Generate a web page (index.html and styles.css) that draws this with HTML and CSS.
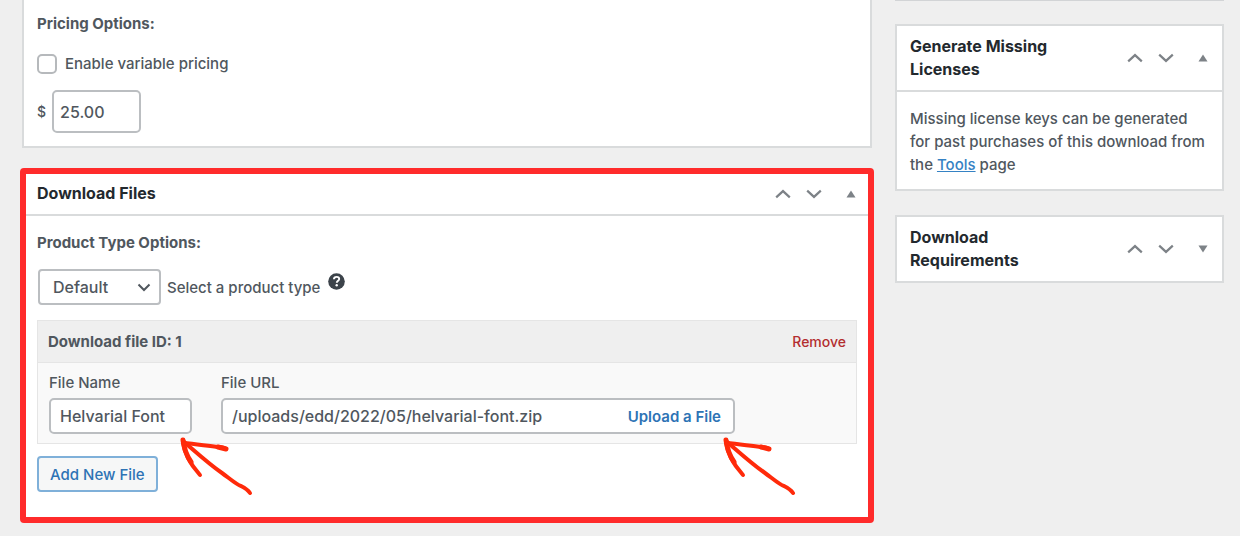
FILE: index.html
```html
<!DOCTYPE html>
<html lang="en">
<head>
<meta charset="utf-8">
<title>Edit Download</title>
<link rel="stylesheet" href="styles.css">
</head>
<body>
<svg class="defs" aria-hidden="true">
  <symbol id="up" viewBox="0 0 16 10"><path d="M1.2 8.4 8 2.1l6.8 6.3" fill="none" stroke="currentColor" stroke-width="2.2"/></symbol>
  <symbol id="down" viewBox="0 0 16 10"><path d="M1.2 1.6 8 7.9l6.8-6.3" fill="none" stroke="currentColor" stroke-width="2.2"/></symbol>
  <symbol id="open" viewBox="0 0 10 8"><path d="M5 .5 9.5 7.5h-9z" fill="currentColor"/></symbol>
  <symbol id="closed" viewBox="0 0 10 8"><path d="M5 7.5.5.5h9z" fill="currentColor"/></symbol>
  <symbol id="arrow" viewBox="0 0 76 60">
    <g fill="none" stroke="#ff2a0a" stroke-linecap="round" stroke-linejoin="round">
      <path d="M4 4C18 16 30 27 43 36C50 41 58 48 62 49C66 51 69 53 71 56" stroke-width="4"/>
      <path d="M4 4C5 17 12 28 21 38" stroke-width="4"/>
      <path d="M4 3C5 12 8 19 12 25" stroke-width="5"/>
      <path d="M4 6C18 7 28 9 40 10C44 10 46 11 47 12" stroke-width="4"/>
      <path d="M39 10 47 12" stroke-width="5"/>
    </g>
  </symbol>
</svg>
<div class="page">
  <main class="column">
    <section class="panel pricing">
      <h3 class="label">Pricing Options:</h3>
      <label class="check-row"><input class="check" type="checkbox"><span>Enable variable pricing</span></label>
      <div class="price-row">
        <label class="currency" for="price">$</label>
        <input class="text-input price" id="price" type="text" value="25.00">
      </div>
    </section>

    <section class="panel files">
      <header class="panel-head">
        <h2 class="title">Download Files</h2>
        <div class="actions">
          <button class="icon-btn" aria-label="Move up"><svg class="chevron"><use href="#up"/></svg></button>
          <button class="icon-btn" aria-label="Move down"><svg class="chevron"><use href="#down"/></svg></button>
          <button class="icon-btn toggle" aria-label="Toggle panel"><svg class="triangle"><use href="#open"/></svg></button>
        </div>
      </header>
      <div class="files-body">
        <h3 class="label">Product Type Options:</h3>
        <div class="type-row">
          <div class="select-wrap">
            <select class="select" id="type"><option>Default</option></select>
            <svg class="select-arrow" viewBox="0 0 14 9" aria-hidden="true"><path d="M1.5 1.5 7 7l5.500-5.500" fill="none" stroke="#50575e" stroke-width="2"/></svg>
          </div>
          <label for="type">Select a product type</label>
          <svg class="help" viewBox="0 0 17 17" role="img" aria-label="Help">
            <circle cx="8.500" cy="8.500" r="8.300" fill="#3c434a"/>
            <path d="M5.900 6.300C6 4.700 7.100 3.900 8.600 3.900c1.500 0 2.600.8 2.600 2.100 0 1.700-2.400 1.900-2.400 3.700" fill="none" stroke="#fff" stroke-width="1.900"/>
            <circle cx="8.700" cy="12.200" r="1.200" fill="#fff"/>
          </svg>
        </div>
        <div class="file">
          <div class="file-head">
            <strong>Download file ID: 1</strong>
            <a class="remove" href="#">Remove</a>
          </div>
          <div class="file-fields">
            <div class="field name">
              <label for="name">File Name</label>
              <input class="text-input" id="name" type="text" value="Helvarial Font">
              <svg class="pointer" aria-hidden="true"><use href="#arrow"/></svg>
            </div>
            <div class="field url">
              <label for="url">File URL</label>
              <div class="url-box">
                <input class="url-input" id="url" type="text" value="/uploads/edd/2022/05/helvarial-font.zip">
                <a class="upload" href="#">Upload a File</a>
              </div>
              <svg class="pointer" aria-hidden="true"><use href="#arrow"/></svg>
            </div>
          </div>
        </div>
        <button class="add">Add New File</button>
      </div>
    </section>
  </main>

  <aside class="side">
    <section class="panel">
      <header class="panel-head">
        <h2 class="title">Generate Missing Licenses</h2>
        <div class="actions">
          <button class="icon-btn" aria-label="Move up"><svg class="chevron"><use href="#up"/></svg></button>
          <button class="icon-btn" aria-label="Move down"><svg class="chevron"><use href="#down"/></svg></button>
          <button class="icon-btn toggle" aria-label="Toggle panel"><svg class="triangle"><use href="#open"/></svg></button>
        </div>
      </header>
      <p class="note">Missing license keys can be generated for past purchases of this download from the <a class="link" href="#">Tools</a> page</p>
    </section>
    <section class="panel">
      <header class="panel-head closed">
        <h2 class="title">Download Requirements</h2>
        <div class="actions">
          <button class="icon-btn" aria-label="Move up"><svg class="chevron"><use href="#up"/></svg></button>
          <button class="icon-btn" aria-label="Move down"><svg class="chevron"><use href="#down"/></svg></button>
          <button class="icon-btn toggle" aria-label="Toggle panel"><svg class="triangle"><use href="#closed"/></svg></button>
        </div>
      </header>
    </section>
  </aside>
</div>
</body>
</html>
```
FILE: styles.css
```css
* { box-sizing: border-box; }
body {
  margin: 0;
  background: #efefef;
  color: #50575e;
  font: 500 15px/23px Inter, "Liberation Sans", sans-serif;
}
h2, h3, p { margin: 0; }
input, select, button { font: inherit; color: inherit; }
svg { display: block; }
.defs { position: absolute; width: 0; height: 0; }

.page { display: flex; gap: 23px; padding: 0 16px 14px 22px; }
.column { flex: 1; min-width: 0; display: flex; flex-direction: column; gap: 22px; }
.side {
  width: 329px;
  display: flex;
  flex-direction: column;
  gap: 24px;
  padding-top: 23px;
  border-top: 1px solid #d2d4d6;
}
.panel { background: #fff; border: 2px solid #d9dbdc; }
.label { font-size: 15px; line-height: 24px; font-weight: 700; }

.pricing { border-top: 0; padding: 12px 13px 13px; }
.check-row { display: flex; align-items: center; gap: 8px; margin-top: 16px; line-height: 24px; }
.check {
  appearance: none;
  width: 20px;
  height: 20px;
  margin: 0;
  border: 2px solid #b6b9bc;
  border-radius: 5px;
  background: #fff;
}
.price-row { display: flex; align-items: center; gap: 6px; margin-top: 14px; }
.currency { font-size: 14px; }
.text-input {
  width: 100%;
  height: 36px;
  padding: 0 9px;
  border: 2px solid #bbbec1;
  border-radius: 5px;
  background: #fff;
  font-size: 16px;
}
.price { width: 89px; height: 43px; padding: 0 6px; }

.files { outline: 6px solid #ff2b2b; outline-offset: -4px; border-radius: 2px; }
.panel-head {
  display: flex;
  align-items: center;
  justify-content: space-between;
  gap: 24px;
  padding: 9px 14px 8px 13px;
  border-bottom: 2px solid #d9dbdc;
}
.side .panel-head { padding: 9px 15px 9px 13px; }
.side .closed { border-bottom: 0; }
.title { color: #23292e; font-size: 16px; line-height: 23px; font-weight: 700; }
.files .panel-head { padding: 9px 15px 8px 13px; }
.files .title { line-height: 25px; }
.side .title { max-width: 170px; }
.actions { display: flex; align-items: center; flex-shrink: 0; color: #7d8287; }
.icon-btn { display: grid; place-items: center; width: 31px; padding: 0; border: 0; background: none; }
.toggle { width: 24px; margin-left: 10px; margin-right: -8px; }
.chevron { width: 16px; height: 10px; }
.triangle { width: 10px; height: 8px; }

.files-body { padding: 15px 13px 27px; }
.type-row { display: flex; align-items: center; gap: 6px; margin-top: 14px; }
.select-wrap { position: relative; width: 123px; margin-left: 1px; }
.select {
  appearance: none;
  display: block;
  width: 100%;
  height: 36px;
  padding: 0 32px 0 13px;
  border: 2px solid #bbbec1;
  border-radius: 4px;
  background: #fff;
  font-size: 16px;
}
.select-arrow { position: absolute; right: 10px; top: 14px; width: 14px; height: 9px; pointer-events: none; }
.help { width: 17px; height: 17px; margin-left: 2px; margin-bottom: 12px; }

.file { margin-top: 15px; border: 1px solid #e5e5e5; background: #f9f9f9; }
.file-head {
  display: flex;
  justify-content: space-between;
  padding: 9px 10px 8px;
  line-height: 24px;
  background: #efefef;
  border-bottom: 1px solid #e5e5e5;
}
.file-head strong { font-weight: 700; }
.remove { color: #b32d2e; font-size: 14px; text-decoration: none; }
.file-fields { display: flex; gap: 29px; padding: 8px 121px 9px 11px; }
.field { position: relative; }
.field label { display: block; line-height: 24px; margin-bottom: 3px; }
.name { width: 143px; }
.url { flex: 1; }
.url-box {
  display: flex;
  align-items: center;
  height: 36px;
  padding: 0 12px 0 9px;
  border: 2px solid #bbbec1;
  border-radius: 5px;
  background: #fff;
}
.url-input { flex: 1; min-width: 0; padding: 0; border: 0; background: none; font-size: 16px; }
.upload { color: #2d73b5; font-weight: 600; text-decoration: none; }
.pointer { position: absolute; right: -63px; bottom: -63px; width: 76px; height: 60px; z-index: 1; }
.add {
  margin-top: 12px;
  height: 36px;
  padding: 0 11px;
  border: 2px solid #7fb0d9;
  border-radius: 4px;
  background: #f6f7f7;
  color: #2d73b5;
}
.note { padding: 15px 13px 13px; }
.link { color: #3582c4; }
```
